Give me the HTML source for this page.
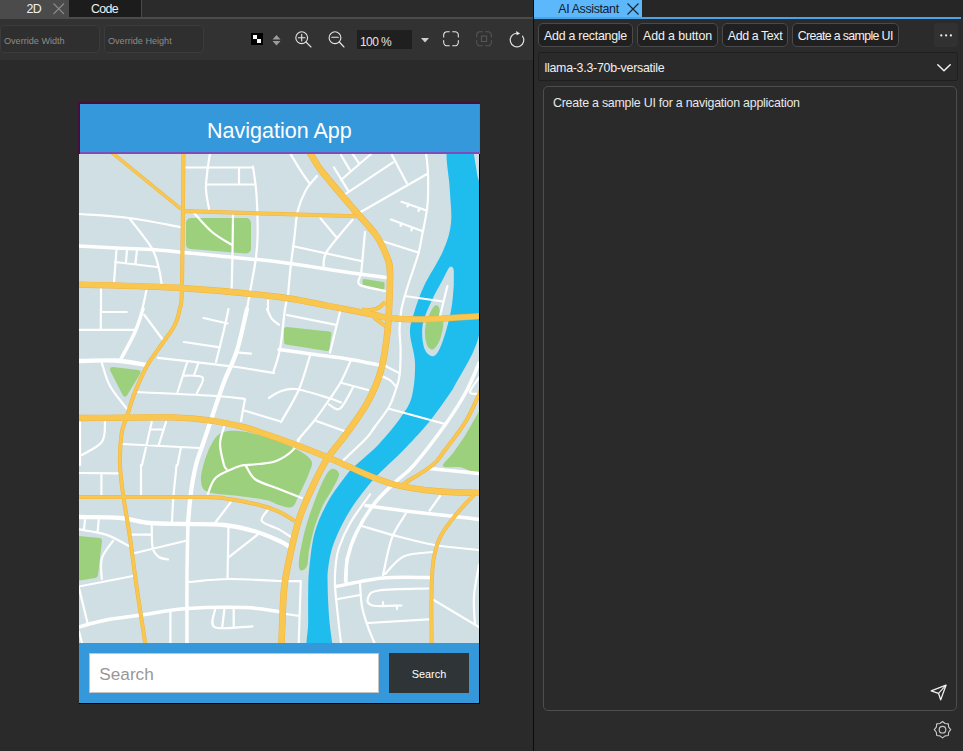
<!DOCTYPE html>
<html><head><meta charset="utf-8"><title>UI</title>
<style>
*{box-sizing:border-box;margin:0;padding:0}
html,body{width:963px;height:751px;overflow:hidden;background:#2a2a2a;font-family:"Liberation Sans",sans-serif;color:#e6e6e6}
#left{position:absolute;left:0;top:0;width:533px;height:751px;background:#2a2a2a}
#ltabs{position:absolute;left:0;top:0;width:533px;height:17px;background:#2b2b2b}
#ltabline{position:absolute;left:0;top:17px;width:533px;height:2px;background:#4b4b4b}
.tab2d{position:absolute;left:0;top:0;width:69px;height:17px;background:#4b4b4b}
.tabcode{position:absolute;left:69px;top:0;width:73px;height:17px;background:#1c1c1c;border-right:1px solid #4b4b4b}
.tabtxt{position:absolute;top:1.6px;font-size:12.4px;letter-spacing:-0.64px;line-height:15px;color:#f0f0f0;white-space:nowrap}
#toolbar{position:absolute;left:0;top:19px;width:533px;height:41px;background:#323232}
.ov{position:absolute;top:6px;height:28px;border:1px solid #3b3b3b;border-radius:4px;background:#2f2f2f;font-size:9.1px;line-height:30px;color:#8c8c8c;padding-left:3px;white-space:nowrap}
#zoombox{position:absolute;left:357px;top:11px;width:55px;height:19px;background:#1f1f1f;font-size:12px;letter-spacing:-0.6px;line-height:24px;color:#e4e4e4;padding-left:3px;white-space:nowrap}
#divider{position:absolute;left:533px;top:0;width:1.3px;height:751px;background:#0c0c0c}
#right{position:absolute;left:535px;top:0;width:428px;height:751px;background:#2b2b2b;box-shadow:-0.8px 0 0 #2b2b2b}
#rtabs{position:absolute;left:-1px;top:0;width:429px;height:17px;background:#262626}
#rtab{position:absolute;left:0;top:0;width:107.7px;height:17px;background:#5cb8fa}
#rtabtxt{position:absolute;left:24.3px;top:1.8px;letter-spacing:-0.36px;font-size:12.4px;line-height:15px;color:#14202c;white-space:nowrap}
#rline{position:absolute;left:-1px;top:17px;width:427px;height:2px;background:#4ba3e8}
.btn{position:absolute;top:23px;height:24px;border:1px solid #4a4a4a;border-radius:5px;background:#202020;line-height:24.5px;color:#f2f2f2;text-align:center;white-space:nowrap}
#more{position:absolute;left:399px;top:23px;width:24px;height:24px;border-radius:4px;background:#313131}
#combo{position:absolute;left:3px;top:52px;width:420px;height:29px;border:1px solid #1f1f1f;border-radius:2px;background:#2a2a2a;font-size:12.4px;letter-spacing:-0.27px;line-height:31px;color:#f0f0f0;padding-left:5.5px;white-space:nowrap}
#ta{position:absolute;left:8px;top:86px;width:414px;height:625px;border:1px solid #4d4d4d;border-radius:5px;background:#2a2a2a;font-size:12.4px;letter-spacing:-0.23px;color:#e8e8e8}
svg.ic{position:absolute;overflow:visible}
/* phone */
#phone{position:absolute;left:79px;top:103px;width:401px;height:600.6px;background:#000}
#hdr{position:absolute;left:0.6px;top:0.4px;width:400.6px;height:50.4px;background:#3498db;text-align:center;color:#fff;font-size:21.5px;line-height:56px;white-space:nowrap;text-indent:-1px}
.sel{position:absolute}
#map{position:absolute;left:0;top:50px;width:400px;height:490px;background:#d0dfe4;overflow:hidden}
#bbar{position:absolute;left:0;top:540px;width:400.2px;height:59.8px;background:#3498db}
#sin{position:absolute;left:10px;top:10px;width:290px;height:40px;background:#fff;border:1px solid #c4c4c4;color:#979797;font-size:17.2px;line-height:41px;padding-left:9.3px}
#sbtn{position:absolute;left:310px;top:10px;width:80px;height:40px;background:#2f3437;color:#fff;font-size:10.9px;line-height:42.5px;text-align:center}
</style></head><body>
<div id="left">
  <div id="ltabs"><div class="tab2d"></div><div class="tabcode"></div>
    <span class="tabtxt" style="left:26.5px">2D</span>
    <span class="tabtxt" style="left:91px">Code</span>
    <svg class="ic" style="left:53px;top:3px" width="12" height="12" viewBox="0 0 12 12"><path d="M0.5 0.5L11 11M11 0.5L0.5 11" stroke="#8a8a8a" stroke-width="1.1" fill="none"/></svg>
  </div>
  <div id="ltabline"></div>
  <div id="toolbar">
    <div class="ov" style="left:0px;width:100px">Override Width</div>
    <div class="ov" style="left:104px;width:100px">Override Height</div>
    <!-- checker -->
    <svg class="ic" style="left:251px;top:14px" width="12" height="12" viewBox="0 0 12 12"><rect width="12" height="12" fill="#000"/><rect x="2" y="2" width="4" height="4" fill="#fff"/><rect x="6" y="6" width="4" height="4" fill="#fff"/></svg>
    <!-- spinner -->
    <svg class="ic" style="left:272px;top:16px" width="9" height="11" viewBox="0 0 9 11"><path d="M0.5 4.6L4.5 0L8.5 4.6Z M0.5 6L8.5 6L4.5 10.6Z" fill="#9c9c9c"/></svg>
    <!-- zoom in -->
    <svg class="ic" style="left:294px;top:10.7px" width="20" height="20" viewBox="0 0 20 20"><g fill="none" stroke="#e6e6e6" stroke-width="1.1" stroke-linecap="round"><circle cx="7.7" cy="7.7" r="5.9"/><path d="M12 12L17 17M4.4 7.7H11M7.7 4.4V11"/></g></svg>
    <!-- zoom out -->
    <svg class="ic" style="left:326.6px;top:10.7px" width="20" height="20" viewBox="0 0 20 20"><g fill="none" stroke="#e6e6e6" stroke-width="1.1" stroke-linecap="round"><circle cx="8" cy="7.7" r="5.9"/><path d="M12.3 12L17 17M4.7 7.2H11.3"/></g></svg>
    <div id="zoombox">100 %</div>
    <svg class="ic" style="left:420.5px;top:19px" width="8" height="5" viewBox="0 0 8 5"><path d="M0 0H8L4 4.4Z" fill="#cfcfcf"/></svg>
    <!-- fit -->
    <svg class="ic" style="left:443px;top:12px" width="16.5" height="16" viewBox="0 0 17 16" preserveAspectRatio="none"><g fill="none" stroke="#e6e6e6" stroke-width="1.1" stroke-linecap="round"><path d="M0.7 6V4.2A3.5 3.5 0 0 1 4.2 0.7H6.5M10 0.7H12.3A3.5 3.5 0 0 1 15.8 4.2V6M15.8 9.5V11.3A3.5 3.5 0 0 1 12.3 14.8H10M6.5 14.8H4.2A3.5 3.5 0 0 1 0.7 11.3V9.5"/></g></svg>
    <!-- disabled fit -->
    <svg class="ic" style="left:476px;top:12px" width="16.5" height="16" viewBox="0 0 17 16" preserveAspectRatio="none"><g fill="none" stroke="#565656" stroke-width="1.1" stroke-linecap="round"><path d="M0.7 6V4.2A3.5 3.5 0 0 1 4.2 0.7H6.5M10 0.7H12.3A3.5 3.5 0 0 1 15.8 4.2V6M15.8 9.5V11.3A3.5 3.5 0 0 1 12.3 14.8H10M6.5 14.8H4.2A3.5 3.5 0 0 1 0.7 11.3V9.5"/><rect x="5.6" y="5.1" width="5.4" height="5.4"/></g></svg>
    <!-- refresh -->
    <svg class="ic" style="left:508px;top:11px" width="18" height="18" viewBox="0 0 18 18"><g fill="none" stroke="#e6e6e6" stroke-width="1.1" stroke-linecap="round"><path d="M14.57 6.1A6.8 6.8 0 1 1 8.41 3.23"/></g><path d="M8.1 1.1L8.6 5.3L12.1 3.5Z" fill="#e6e6e6"/></svg>
  </div>
  <div id="phone">
    <div id="map"><svg width="400" height="490" viewBox="0 0 400 490" style="position:absolute;left:0;top:0;display:block;filter:blur(0.45px)">
<rect width="400" height="490" fill="#d0dfe4"/>
<path d="M369.0 -6.0C365.1 0.8 370.2 22.3 370.7 35.0C371.2 47.7 373.1 59.5 372.0 70.0C370.9 80.5 368.5 87.5 364.0 98.0C359.5 108.5 349.8 122.7 345.0 133.0C340.2 143.3 337.3 152.2 335.0 160.0C332.7 167.8 330.8 171.7 331.0 180.0C331.2 188.3 335.7 199.5 336.0 210.0C336.3 220.5 335.3 234.0 333.0 243.0C330.7 252.0 327.5 256.0 322.0 264.0C316.5 272.0 307.5 283.0 300.0 291.0C292.5 299.0 282.4 306.8 277.0 312.0C271.6 317.2 272.2 315.8 267.5 322.0C262.8 328.2 254.1 339.3 248.8 349.0C243.5 358.7 238.7 368.8 235.6 380.0C232.5 391.2 231.3 406.0 230.2 416.0C229.1 426.0 229.4 431.0 229.2 440.0C229.0 449.0 229.2 460.0 229.2 470.0C229.2 480.0 225.1 495.0 229.2 500.0C233.3 505.0 250.0 501.7 254.0 500.0C258.0 498.3 253.8 495.0 253.2 490.0C252.6 485.0 251.3 476.7 250.6 470.0C249.9 463.3 249.5 456.5 249.2 449.8C248.9 443.1 248.6 435.8 248.6 430.0C248.6 424.2 248.2 421.5 249.2 415.0C250.2 408.5 251.1 400.2 254.5 391.0C257.9 381.8 263.5 370.0 269.5 360.0C275.5 350.0 284.1 338.8 290.5 331.0C296.9 323.2 302.4 318.6 308.0 313.0C313.6 307.4 317.4 304.4 324.3 297.2C331.2 290.0 341.7 279.2 349.5 269.7C357.3 260.2 366.7 246.4 371.2 240.0C375.7 233.6 372.5 238.2 376.5 231.0C380.5 223.8 390.6 207.8 395.0 197.0C399.4 186.2 400.5 182.2 403.0 166.0C405.5 149.8 408.8 119.3 410.0 100.0C411.2 80.7 411.7 62.0 410.0 50.0C408.3 38.0 402.2 34.0 400.0 28.0C397.8 22.0 397.9 18.7 397.0 14.0C396.1 9.3 395.3 3.3 394.8 0.0C394.3 -3.3 398.3 -5.0 394.0 -6.0C389.7 -7.0 372.9 -12.8 369.0 -6.0Z" fill="#1fbdee"/>
<path d="M369.5 115.5C371.0 113.1 371.2 113.7 372.0 113.8C372.8 113.9 374.0 114.1 374.5 116.0C375.0 117.9 374.8 121.8 374.8 125.0C374.8 128.2 375.0 129.8 374.6 135.0C374.2 140.2 373.6 148.8 372.3 156.0C371.0 163.2 368.9 171.5 367.0 178.0C365.1 184.5 363.0 190.8 361.0 195.0C359.0 199.2 357.2 202.2 355.0 203.0C352.8 203.8 349.8 202.2 348.0 200.0C346.2 197.8 344.7 195.0 344.0 190.0C343.3 185.0 342.5 177.2 344.0 170.0C345.5 162.8 349.8 154.0 353.0 147.0C356.2 140.0 360.2 133.2 363.0 128.0C365.8 122.8 368.0 117.9 369.5 115.5Z" fill="#d0dfe4"/>
<path d="M358.5 152.5C359.4 152.9 360.1 154.2 360.5 156.0C360.9 157.8 360.4 161.0 361.0 163.0C361.6 165.0 363.5 166.0 364.0 168.0C364.5 170.0 364.7 171.5 364.0 175.0C363.3 178.5 361.7 185.4 360.0 189.0C358.3 192.6 355.9 195.8 354.0 196.5C352.1 197.2 349.8 195.4 348.5 193.0C347.2 190.6 346.2 185.8 346.0 182.0C345.8 178.2 346.2 173.7 347.0 170.0C347.8 166.3 349.7 162.8 351.0 160.0C352.3 157.2 353.8 154.8 355.0 153.5C356.2 152.2 357.6 152.1 358.5 152.5Z" fill="#9dd07c"/>
<path d="M142.0 280.0C146.7 277.7 152.8 277.4 160.0 278.0C167.2 278.6 175.8 280.7 185.0 283.5C194.2 286.3 207.2 291.1 215.0 295.0C222.8 298.9 229.5 302.8 232.0 307.0C234.5 311.2 232.0 314.2 230.0 320.0C228.0 325.8 222.8 336.3 220.0 342.0C217.2 347.7 216.3 352.3 213.0 354.0C209.7 355.7 204.3 353.2 200.0 352.0C195.7 350.8 193.7 348.5 187.0 347.0C180.3 345.5 169.7 344.3 160.0 343.0C150.3 341.7 135.3 341.5 129.0 339.0C122.7 336.5 122.7 332.8 122.0 328.0C121.3 323.2 123.3 316.0 125.0 310.0C126.7 304.0 129.2 297.0 132.0 292.0C134.8 287.0 137.3 282.3 142.0 280.0Z" fill="#9dd07c"/>
<path d="M252.5 316.0C255.0 315.2 259.8 317.7 260.0 321.0C260.2 324.3 256.2 330.7 253.5 336.0C250.8 341.3 246.5 346.5 243.5 353.0C240.5 359.5 237.6 367.5 235.3 375.0C233.1 382.5 231.2 391.7 230.0 398.0C228.8 404.3 229.3 409.8 228.0 413.0C226.7 416.2 223.4 418.0 222.0 417.5C220.6 417.0 219.6 414.6 219.8 410.0C220.0 405.4 221.6 396.7 223.0 390.0C224.4 383.3 225.8 377.2 228.0 370.0C230.2 362.8 233.2 354.3 236.0 347.0C238.8 339.7 242.2 331.2 245.0 326.0C247.8 320.8 250.0 316.8 252.5 316.0Z" fill="#9dd07c"/>
<path d="M406.0 252.0C404.7 243.0 401.2 257.2 398.0 262.0C394.8 266.8 391.0 274.7 387.0 281.0C383.0 287.3 377.8 294.7 374.0 300.0C370.2 305.3 363.0 310.7 364.0 313.0C365.0 315.3 373.0 313.5 380.0 314.0C387.0 314.5 401.7 326.3 406.0 316.0C410.3 305.7 407.3 261.0 406.0 252.0Z" fill="#9dd07c"/>
<path d="M112.0 70.0L167.0 70.0L167.0 95.5L112.0 91.0Z" fill="#9dd07c" stroke="#9dd07c" stroke-width="10" stroke-linejoin="round"/>
<path d="M285.0 127.5L304.0 130.5L304.0 135.0L285.0 130.5Z" fill="#9dd07c" stroke="#9dd07c" stroke-width="3" stroke-linejoin="round"/>
<path d="M33.5 216.5L59.0 219.5L46.0 241.0Z" fill="#9dd07c" stroke="#9dd07c" stroke-width="5" stroke-linejoin="round"/>
<path d="M207.5 176.5L250.0 181.0L248.0 195.5L207.5 189.0Z" fill="#9dd07c" stroke="#9dd07c" stroke-width="5" stroke-linejoin="round"/>
<path d="M0.0 386.0L20.0 388.0L16.0 422.0L0.0 424.5Z" fill="#9dd07c" stroke="#9dd07c" stroke-width="6" stroke-linejoin="round"/>
<path d="M168.0 156.0C166.3 162.9 161.8 185.3 158.0 197.5C154.2 209.7 149.2 217.9 145.0 229.0C140.8 240.1 136.4 254.0 133.0 264.0C129.6 274.0 127.3 281.0 124.6 289.0C121.9 297.0 119.1 303.7 117.0 312.0C114.9 320.3 113.3 329.3 112.0 339.0C110.7 348.7 109.5 364.8 109.0 370.0M0.0 208.0C6.2 207.9 25.8 206.8 37.0 207.5C48.2 208.2 62.4 211.2 67.5 212.0M0.0 364.0C6.9 364.2 29.7 364.0 41.5 365.0C53.3 366.0 59.5 369.0 70.6 370.0C81.7 371.0 95.6 370.7 108.0 371.0C120.4 371.3 133.6 370.8 145.0 372.0C156.4 373.2 167.3 375.9 176.5 378.5C185.7 381.1 194.2 385.2 200.0 387.8C205.8 390.4 209.2 393.0 211.0 394.0" fill="none" stroke="#fff" stroke-width="4.3" stroke-linecap="round" stroke-linejoin="round"/>
<path d="M109.0 370.0C108.8 378.3 108.2 400.0 108.0 420.0C107.8 440.0 108.0 478.3 108.0 490.0M64.0 156.0C62.7 159.8 59.8 170.5 56.0 179.0C52.2 187.5 43.9 202.3 41.5 207.0M0.0 93.0C6.2 93.3 24.8 94.4 37.0 95.0C49.2 95.6 55.8 95.2 73.0 96.5C90.2 97.8 118.8 100.9 140.0 103.0C161.2 105.1 180.0 106.5 200.0 109.0C220.0 111.5 242.2 115.4 260.0 118.0C277.8 120.6 299.2 123.5 307.0 124.6M0.0 474.0C4.5 472.8 16.7 469.0 27.0 467.0C37.3 465.0 48.5 463.9 62.0 462.0C75.5 460.1 90.7 456.8 108.0 455.6C125.3 454.4 150.7 454.1 166.0 454.6C181.3 455.1 194.3 458.0 200.0 458.7M200.0 196.5C205.3 197.2 220.6 199.4 232.0 201.0C243.4 202.6 257.2 204.2 268.5 206.0C279.8 207.8 294.5 211.0 299.7 212.0M400.0 210.0C397.8 214.8 392.7 228.7 387.0 239.0C381.3 249.3 374.7 259.8 366.0 272.0C357.3 284.2 343.0 302.7 335.0 312.0C327.0 321.3 324.6 321.2 318.0 327.6C311.4 334.0 302.3 341.6 295.5 350.4C288.7 359.2 281.5 371.3 277.0 380.5C272.5 389.7 270.2 397.6 268.5 405.5C266.8 413.4 266.8 424.2 266.5 428.0M287.0 352.5C293.3 353.4 310.4 355.9 324.6 357.7C338.8 359.4 359.4 361.6 372.0 363.0C384.6 364.4 395.3 365.8 400.0 366.4M350.6 315.5L400.0 320.5M257.0 433.5C264.8 432.1 288.4 426.5 304.0 425.0C319.6 423.5 342.8 424.6 350.6 424.5" fill="none" stroke="#fff" stroke-width="3.5" stroke-linecap="round" stroke-linejoin="round"/>
<path d="M0.0 61.0C8.3 61.7 33.2 62.8 50.0 65.0C66.8 67.2 92.5 72.5 101.0 74.0M51.0 66.0C54.7 70.9 68.2 87.2 73.0 95.5C77.8 103.8 78.4 110.2 80.0 116.0C81.6 121.8 82.1 128.1 82.5 130.5M37.4 97.6L35.0 130.0M48.0 97.0L47.0 109.0M58.0 97.0L56.5 110.0M36.0 109.0L78.0 114.0M22.0 136.0L22.0 160.0M67.5 137.0L63.0 158.0M106.0 14.5L174.0 14.5M131.0 0.0C130.5 3.5 128.7 14.8 128.0 21.0C127.3 27.2 126.7 31.2 127.0 37.0C127.3 42.8 129.5 52.8 130.0 56.0M174.0 13.5C174.6 18.2 176.7 29.9 177.5 41.5C178.3 53.1 178.8 71.9 178.6 83.0C178.4 94.1 177.8 98.7 176.5 108.0C175.2 117.3 172.4 131.0 171.0 139.0C169.6 147.0 168.5 153.2 168.0 156.0M128.0 31.5L174.5 31.5M160.0 14.5L160.0 31.5M154.0 62.0C153.9 68.3 153.7 87.5 153.5 100.0C153.3 112.5 152.8 130.8 152.6 137.0M115.0 60.0C118.0 63.2 126.5 73.6 133.0 79.0C139.4 84.4 150.2 90.2 153.7 92.4M189.0 147.5L189.0 158.0M211.0 0.0C212.7 2.8 217.7 11.4 221.0 16.6C224.3 21.8 229.3 28.6 231.0 31.0M238.0 23.0C236.2 25.3 230.2 31.2 227.0 37.0C223.8 42.8 220.6 50.3 218.7 58.0C216.8 65.7 216.8 73.3 215.6 83.0C214.4 92.7 212.5 106.0 211.4 116.0C210.3 126.0 209.4 138.5 209.0 143.0M215.6 93.5L282.0 108.0M273.7 66.5C269.4 71.8 252.7 90.8 247.8 98.6C243.0 106.3 245.1 110.6 244.6 113.0M241.5 65.4L258.0 85.0M286.0 79.0L282.0 122.5M281.0 123.6C281.0 125.0 276.8 129.6 281.0 132.0C285.2 134.4 301.8 137.0 306.0 138.0M264.0 42.6L314.0 9.3M262.0 27.0L292.0 1.0M255.0 14.5L269.6 38.4M262.0 2.0L270.6 16.6M273.7 1.0L280.0 10.4M280.0 60.0L348.5 20.8M313.0 2.0L327.7 30.0M347.0 0.0C347.3 3.5 348.8 12.3 349.0 21.0C349.2 29.7 349.5 41.7 348.5 52.0C347.5 62.3 344.6 74.7 343.0 83.0C341.4 91.3 341.4 93.7 339.0 102.0C336.6 110.3 331.6 124.0 328.8 133.0C326.1 142.0 323.9 148.7 322.5 156.0C321.1 163.3 320.6 170.3 320.5 177.0C320.4 183.7 321.6 188.5 321.6 196.0C321.6 203.5 321.5 215.1 320.6 222.0C319.8 228.9 318.3 232.2 316.5 237.5C314.7 242.8 313.5 247.9 310.0 254.0C306.5 260.1 299.4 268.8 295.7 274.0C291.9 279.2 292.7 279.5 287.5 285.0C282.3 290.5 268.5 303.3 264.7 307.0M306.6 213.0L320.6 220.4M303.5 223.5C304.9 224.2 309.7 226.2 312.0 228.0C314.3 229.8 316.6 233.3 317.5 234.4M322.5 48.8L346.0 57.0M312.0 66.5L343.0 78.0M303.0 88.0L340.0 99.7M329.0 50.5L328.5 53.5M340.0 55.0L339.5 58.0M322.0 70.0L321.5 73.0M333.0 74.5L332.5 77.5M325.6 143.0L364.0 148.5M368.4 133.0L361.0 163.0M0.0 176.8L55.0 176.8M21.8 156.0L21.8 176.8M21.8 159.0L47.8 159.0M65.4 162.0L84.0 187.0M22.8 210.0C24.2 213.8 26.8 225.4 31.0 233.0C35.2 240.6 45.0 251.9 47.8 255.7M79.0 204.8C90.8 206.2 130.2 210.5 149.5 213.0C168.8 215.5 187.4 218.8 195.0 220.0M58.0 239.0C71.2 239.7 119.0 241.8 137.0 243.0C155.0 244.2 161.2 245.5 166.0 246.0M166.0 246.0L162.0 268.0M149.5 156.0C148.8 159.5 147.1 168.0 145.0 176.8C142.9 185.6 138.3 203.6 137.0 209.0M124.6 165.0L148.5 170.5M105.0 189.0L141.0 194.4M160.0 199.6L172.0 200.7M108.0 209.6L98.6 239.0M119.0 211.0L115.0 222.5M104.0 222.5C107.3 222.8 121.3 221.6 123.6 224.5C125.9 227.4 118.9 237.4 118.0 240.0M209.0 143.0C208.5 145.2 207.3 147.2 206.0 156.0C204.7 164.8 203.0 185.3 201.0 196.0C199.0 206.7 195.2 216.0 194.0 220.0M188.0 156.0C188.8 157.7 191.0 163.4 193.0 166.0C195.0 168.6 198.8 170.7 200.0 171.6M190.0 245.0C191.7 244.0 195.6 240.5 200.0 239.0C204.4 237.5 208.3 235.0 216.6 236.0C224.9 237.0 242.4 242.8 250.0 245.0C257.6 247.2 260.0 248.8 262.0 249.5M166.0 257.8L200.0 268.0M26.0 269.0C25.5 272.3 27.1 283.2 22.8 289.0C18.5 294.8 3.8 301.1 0.0 303.5M1.0 269.0L1.0 312.0M72.7 269.0L63.0 312.0M87.0 269.0L80.0 291.0M71.6 276.5L85.0 276.5M43.6 291.0L120.5 295.0M101.8 295.0L98.6 312.0M145.0 274.0C144.3 276.8 141.0 284.7 141.0 291.0C141.0 297.3 143.9 307.8 145.0 312.0C146.1 316.2 147.1 315.3 147.5 316.0M208.0 162.0L256.0 171.6M261.0 159.0L251.0 199.6M231.0 202.7C229.1 208.4 224.5 225.9 219.7 237.0C214.9 248.1 204.9 263.7 202.0 269.0M271.6 208.0C270.0 211.4 265.6 222.2 262.0 228.7C258.4 235.2 254.5 240.4 250.0 247.0C245.5 253.6 240.2 261.3 235.0 268.0C229.8 274.7 221.4 283.8 218.7 287.0M262.0 229.7L289.0 237.0M273.7 235.0C271.6 238.4 264.9 252.9 261.0 255.7C257.1 258.4 251.8 252.2 250.0 251.5M237.4 268.0L266.5 278.5M310.0 255.7L366.0 271.0M400.0 224.5C398.5 226.9 391.0 236.2 391.0 239.0C391.0 241.8 398.5 240.7 400.0 241.0M62.0 312.0L62.0 342.0M97.6 312.0C97.1 317.2 95.3 333.5 94.5 343.0C93.7 352.5 93.2 364.7 93.0 369.0M0.0 320.0L39.5 320.3M22.4 320.0L22.4 343.0M6.0 367.0L5.0 376.4M19.7 367.0L18.7 378.5M0.0 376.4C4.5 377.3 18.7 378.8 27.0 381.6C35.3 384.4 46.2 391.1 50.0 393.0M34.0 387.8C32.1 390.8 24.7 399.1 22.8 405.5C20.9 411.9 22.8 422.6 22.8 426.0M0.0 433.5L54.0 423.0M52.0 381.6L72.7 381.6M72.7 372.0C72.9 375.8 72.5 389.7 73.7 395.0C74.9 400.3 77.5 402.1 80.0 404.0C82.5 405.9 87.5 406.1 89.0 406.5M56.0 400.0L107.0 387.8M151.6 349.4L136.0 370.0M149.5 374.0L148.5 425.0M149.5 404.4L178.6 381.6M110.0 429.0C116.6 428.5 134.5 426.2 149.5 426.0C164.5 425.8 187.9 427.7 200.0 428.0C212.1 428.3 218.2 428.0 221.8 428.0M91.4 459.8L91.4 490.0M136.0 456.7C136.0 459.6 129.8 471.5 136.0 474.3C142.2 477.1 167.2 473.5 173.4 473.3M145.4 456.0L143.3 473.5M154.7 456.0L154.7 473.5M0.0 435.0L8.3 469.0M0.0 478.5L3.0 490.0M189.0 356.6C188.0 358.5 181.0 364.7 182.8 368.0C184.6 371.3 195.2 373.8 200.0 376.4C204.8 379.0 209.5 382.4 211.4 383.6M128.8 341.0C130.2 338.2 132.1 329.0 137.0 324.5C141.9 320.0 153.2 316.1 158.0 314.0C162.8 311.9 164.7 312.3 166.0 312.0M167.0 313.0C168.6 315.2 171.0 322.7 176.5 326.5C182.0 330.3 192.3 332.9 200.0 336.0C207.7 339.1 219.0 343.5 222.8 345.0M220.5 286.0C219.3 288.0 217.1 294.1 213.2 297.8C209.3 301.5 202.7 305.8 197.2 308.0C191.7 310.2 185.2 310.3 180.0 311.0C174.8 311.7 168.3 311.8 166.0 312.0M291.0 341.5C287.8 346.2 276.7 360.6 271.5 369.5C266.3 378.4 262.5 387.5 260.0 394.6C257.5 401.7 257.4 405.7 256.7 412.0C256.0 418.3 255.6 423.8 256.0 432.5C256.4 441.2 258.0 454.4 259.0 464.0C260.0 473.6 261.5 485.7 262.0 490.0M283.0 373.0C288.5 374.6 303.9 379.4 316.0 382.6C328.1 385.8 341.7 389.6 355.7 392.0C369.7 394.4 392.6 396.2 400.0 397.0M326.7 360.8C324.4 364.8 316.8 374.5 313.0 384.7C309.2 394.9 305.5 415.8 304.0 422.0M361.0 343.0L350.6 357.7M306.0 421.0C309.1 418.1 316.7 407.1 324.6 403.4C332.6 399.7 348.9 399.7 353.7 399.0M349.5 435.5C341.2 435.8 309.8 435.9 299.7 437.5C289.6 439.1 290.0 442.5 289.0 445.0C288.0 447.5 287.9 451.2 293.5 452.5C299.1 453.8 317.7 452.5 322.5 452.5M304.0 449.0L304.0 452.5M318.0 452.5L318.0 456.0M281.0 430.0C281.3 433.9 281.7 446.2 283.0 453.5C284.3 460.8 286.9 467.9 289.0 474.0C291.1 480.1 294.4 487.3 295.5 490.0M259.0 446.0L281.0 442.0M289.0 470.0L349.5 466.4M354.7 447.0L400.0 474.0M400.0 411.7C399.2 416.9 395.7 432.9 395.0 443.0C394.3 453.1 395.8 467.2 396.0 472.0M221.8 428.0L219.7 490.0M206.0 460.8L220.8 463.0M267.5 405.0L267.5 429.6" fill="none" stroke="#fff" stroke-width="2.2" stroke-linecap="round" stroke-linejoin="round"/>
<path d="M31.0 -2.0L102.0 56.0" fill="none" stroke="#eeb340" stroke-width="3.5" stroke-linecap="butt" stroke-linejoin="round"/>
<path d="M104.5 -2.0C104.2 20.5 103.6 106.7 103.0 133.0C102.4 159.3 102.0 149.4 100.7 156.0C99.5 162.6 98.5 166.8 95.5 172.6C92.5 178.4 87.5 184.4 83.0 191.0C78.5 197.6 73.0 204.0 68.5 212.0C64.0 220.0 59.5 230.3 56.0 239.0C52.5 247.7 50.0 257.1 47.8 264.0C45.6 270.9 43.7 272.6 42.6 280.6C41.5 288.6 40.7 301.3 41.0 312.0C41.3 322.7 42.9 332.9 44.6 345.0C46.3 357.1 48.8 369.4 51.0 384.7C53.2 400.0 55.4 418.7 58.0 436.6C60.6 454.5 65.1 482.8 66.5 492.0M103.0 58.0C119.2 58.5 171.0 60.1 200.0 61.0C229.0 61.9 264.2 62.8 277.0 63.2" fill="none" stroke="#eeb340" stroke-width="4.0" stroke-linecap="butt" stroke-linejoin="round"/>
<path d="M-2.0 131.5C15.3 132.1 68.3 132.9 102.0 135.0C135.7 137.1 175.3 141.0 200.0 144.0C224.7 147.0 233.7 149.9 250.0 153.0C266.3 156.1 287.9 160.3 297.6 162.3C307.3 164.3 300.1 164.1 308.0 164.8C315.9 165.5 329.3 166.6 345.0 166.3C360.7 166.0 392.5 163.6 402.0 163.0M-2.0 265.0C13.9 264.9 70.7 263.9 93.5 264.4C116.3 264.9 122.9 266.3 135.0 268.0C147.1 269.7 158.5 272.6 166.0 274.4C173.5 276.2 171.9 276.1 180.0 278.9C188.1 281.6 202.9 286.6 214.3 290.9C225.7 295.1 239.1 300.5 248.6 304.4C258.1 308.3 264.6 311.4 271.5 314.4C278.4 317.4 282.6 319.7 290.0 322.6C297.4 325.5 305.1 329.1 316.0 331.7C326.9 334.3 341.4 336.6 355.7 338.0C370.0 339.4 394.3 339.7 402.0 340.0" fill="none" stroke="#eeb340" stroke-width="6.300000000000001" stroke-linecap="butt" stroke-linejoin="round"/>
<path d="M230.0 -2.0C231.9 1.1 235.8 9.0 241.5 16.6C247.2 24.2 257.9 36.4 264.0 43.6C270.1 50.8 272.4 53.4 278.0 60.0C283.6 66.6 292.6 75.7 297.6 83.0C302.6 90.3 305.8 98.2 308.0 104.0C310.2 109.8 310.7 109.3 311.0 118.0C311.3 126.7 310.5 145.2 310.0 156.0C309.5 166.8 309.4 172.7 308.0 183.0C306.6 193.3 305.1 206.9 301.8 218.0C298.6 229.1 294.2 239.1 288.5 249.5C282.8 259.9 274.2 271.3 267.5 280.6C260.8 289.9 253.6 297.5 248.3 305.5C243.1 313.5 240.6 318.9 236.0 328.6C231.4 338.4 225.1 351.2 220.8 364.0C216.5 376.8 213.0 393.4 210.4 405.5C207.8 417.6 206.3 422.2 205.0 436.6C203.7 451.0 202.9 482.8 202.5 492.0" fill="none" stroke="#eeb340" stroke-width="6.6000000000000005" stroke-linecap="butt" stroke-linejoin="round"/>
<path d="M402.0 237.0C399.5 242.2 393.0 258.0 387.0 268.0C381.0 278.0 371.6 289.7 366.0 297.0C360.4 304.3 360.2 306.6 353.7 312.0C347.1 317.4 332.1 326.1 326.7 329.6C321.2 333.1 321.9 332.4 321.0 333.0M395.0 342.0C392.3 345.0 384.1 353.0 378.6 359.8C373.1 366.6 366.0 375.0 362.0 382.6C358.0 390.2 356.3 396.5 354.7 405.5C353.1 414.5 353.0 422.2 352.6 436.6C352.2 451.0 352.6 482.8 352.6 492.0M-2.0 344.0C19.1 344.0 99.3 343.7 124.6 344.0C149.8 344.3 140.5 344.8 149.5 346.0C158.5 347.2 170.2 349.4 178.6 351.5C187.0 353.6 193.8 355.9 200.0 358.7C206.2 361.4 213.0 366.4 215.6 368.0M294.6 164.4L307.0 173.5M283.0 156.5C284.7 156.6 290.2 157.1 293.0 156.8C295.8 156.5 297.8 155.8 300.0 154.5C302.2 153.2 305.4 149.9 306.5 149.0" fill="none" stroke="#eeb340" stroke-width="3.9" stroke-linecap="butt" stroke-linejoin="round"/>
<path d="M31.0 -2.0L102.0 56.0" fill="none" stroke="#f9c74f" stroke-width="2.6" stroke-linecap="butt" stroke-linejoin="round"/>
<path d="M104.5 -2.0C104.2 20.5 103.6 106.7 103.0 133.0C102.4 159.3 102.0 149.4 100.7 156.0C99.5 162.6 98.5 166.8 95.5 172.6C92.5 178.4 87.5 184.4 83.0 191.0C78.5 197.6 73.0 204.0 68.5 212.0C64.0 220.0 59.5 230.3 56.0 239.0C52.5 247.7 50.0 257.1 47.8 264.0C45.6 270.9 43.7 272.6 42.6 280.6C41.5 288.6 40.7 301.3 41.0 312.0C41.3 322.7 42.9 332.9 44.6 345.0C46.3 357.1 48.8 369.4 51.0 384.7C53.2 400.0 55.4 418.7 58.0 436.6C60.6 454.5 65.1 482.8 66.5 492.0M103.0 58.0C119.2 58.5 171.0 60.1 200.0 61.0C229.0 61.9 264.2 62.8 277.0 63.2" fill="none" stroke="#f9c74f" stroke-width="3.1" stroke-linecap="butt" stroke-linejoin="round"/>
<path d="M-2.0 131.5C15.3 132.1 68.3 132.9 102.0 135.0C135.7 137.1 175.3 141.0 200.0 144.0C224.7 147.0 233.7 149.9 250.0 153.0C266.3 156.1 287.9 160.3 297.6 162.3C307.3 164.3 300.1 164.1 308.0 164.8C315.9 165.5 329.3 166.6 345.0 166.3C360.7 166.0 392.5 163.6 402.0 163.0M-2.0 265.0C13.9 264.9 70.7 263.9 93.5 264.4C116.3 264.9 122.9 266.3 135.0 268.0C147.1 269.7 158.5 272.6 166.0 274.4C173.5 276.2 171.9 276.1 180.0 278.9C188.1 281.6 202.9 286.6 214.3 290.9C225.7 295.1 239.1 300.5 248.6 304.4C258.1 308.3 264.6 311.4 271.5 314.4C278.4 317.4 282.6 319.7 290.0 322.6C297.4 325.5 305.1 329.1 316.0 331.7C326.9 334.3 341.4 336.6 355.7 338.0C370.0 339.4 394.3 339.7 402.0 340.0" fill="none" stroke="#f9c74f" stroke-width="5.4" stroke-linecap="butt" stroke-linejoin="round"/>
<path d="M230.0 -2.0C231.9 1.1 235.8 9.0 241.5 16.6C247.2 24.2 257.9 36.4 264.0 43.6C270.1 50.8 272.4 53.4 278.0 60.0C283.6 66.6 292.6 75.7 297.6 83.0C302.6 90.3 305.8 98.2 308.0 104.0C310.2 109.8 310.7 109.3 311.0 118.0C311.3 126.7 310.5 145.2 310.0 156.0C309.5 166.8 309.4 172.7 308.0 183.0C306.6 193.3 305.1 206.9 301.8 218.0C298.6 229.1 294.2 239.1 288.5 249.5C282.8 259.9 274.2 271.3 267.5 280.6C260.8 289.9 253.6 297.5 248.3 305.5C243.1 313.5 240.6 318.9 236.0 328.6C231.4 338.4 225.1 351.2 220.8 364.0C216.5 376.8 213.0 393.4 210.4 405.5C207.8 417.6 206.3 422.2 205.0 436.6C203.7 451.0 202.9 482.8 202.5 492.0" fill="none" stroke="#f9c74f" stroke-width="5.7" stroke-linecap="butt" stroke-linejoin="round"/>
<path d="M402.0 237.0C399.5 242.2 393.0 258.0 387.0 268.0C381.0 278.0 371.6 289.7 366.0 297.0C360.4 304.3 360.2 306.6 353.7 312.0C347.1 317.4 332.1 326.1 326.7 329.6C321.2 333.1 321.9 332.4 321.0 333.0M395.0 342.0C392.3 345.0 384.1 353.0 378.6 359.8C373.1 366.6 366.0 375.0 362.0 382.6C358.0 390.2 356.3 396.5 354.7 405.5C353.1 414.5 353.0 422.2 352.6 436.6C352.2 451.0 352.6 482.8 352.6 492.0M-2.0 344.0C19.1 344.0 99.3 343.7 124.6 344.0C149.8 344.3 140.5 344.8 149.5 346.0C158.5 347.2 170.2 349.4 178.6 351.5C187.0 353.6 193.8 355.9 200.0 358.7C206.2 361.4 213.0 366.4 215.6 368.0M294.6 164.4L307.0 173.5M283.0 156.5C284.7 156.6 290.2 157.1 293.0 156.8C295.8 156.5 297.8 155.8 300.0 154.5C302.2 153.2 305.4 149.9 306.5 149.0" fill="none" stroke="#f9c74f" stroke-width="3.0" stroke-linecap="butt" stroke-linejoin="round"/>
</svg></div>
    <div id="hdr">Navigation App</div>
    <div class="sel" style="left:-1.1px;top:-1.3px;width:402.3px;height:1.8px;background:#4b0c3b"></div>
    <div class="sel" style="left:-1.1px;top:-1.3px;width:1.8px;height:52.1px;background:#4b0c3b"></div>
    <div class="sel" style="left:0.7px;top:49.2px;width:400.5px;height:1.6px;background:#7f4cbc"></div>
    <div class="sel" style="left:399.6px;top:0.5px;width:1.6px;height:50.3px;background:#a05ac8"></div>
    <div id="bbar"><div id="sin">Search</div><div id="sbtn">Search</div></div>
  </div>
</div>
<div id="divider"></div>
<div id="right">
  <div id="rtabs"><div id="rtab"></div><span id="rtabtxt">AI Assistant</span>
    <svg class="ic" style="left:93px;top:3px" width="12" height="12" viewBox="0 0 12 12"><path d="M0.5 0.5L11.5 11.5M11.5 0.5L0.5 11.5" stroke="#1a2630" stroke-width="1.2" fill="none"/></svg>
  </div>
  <div id="rline"></div>
  <div class="btn" style="left:3px;width:95px;font-size:12.4px;letter-spacing:-0.26px">Add a rectangle</div>
  <div class="btn" style="left:102px;width:81px;font-size:12.4px;letter-spacing:-0.11px">Add a button</div>
  <div class="btn" style="left:187px;width:66px;font-size:12.4px;letter-spacing:-0.39px">Add a Text</div>
  <div class="btn" style="left:256.5px;width:107.5px;font-size:12.4px;letter-spacing:-0.66px">Create a sample UI</div>
  <div id="more"><svg class="ic" style="left:0;top:0" width="24" height="24" viewBox="0 0 24 24"><circle cx="7.3" cy="12.4" r="1.1" fill="#f0f0f0"/><circle cx="12.1" cy="12.4" r="1.1" fill="#f0f0f0"/><circle cx="16.9" cy="12.4" r="1.1" fill="#f0f0f0"/></svg></div>
  <div id="combo">llama-3.3-70b-versatile
    <svg class="ic" style="left:398px;top:11px" width="14" height="8" viewBox="0 0 14 8"><path d="M0.8 0.8L7 6.8L13.2 0.8" stroke="#f0f0f0" stroke-width="1.5" fill="none" stroke-linecap="round" stroke-linejoin="round"/></svg>
  </div>
  <div id="ta"><div style="position:absolute;left:9px;top:9px;line-height:15px;white-space:nowrap">Create a sample UI for a navigation application</div>
    <svg class="ic" style="left:386px;top:597px" width="18" height="18" viewBox="0 0 18 18"><path d="M16 1.2L1.2 6.8L8.5 9.3L10.7 15.9Z" fill="none" stroke="#f0f0f0" stroke-width="1.3" stroke-linejoin="round"/><path d="M8.5 9.3L16 1.2" stroke="#f0f0f0" stroke-width="1.1"/></svg>
  </div>
  <!-- gear -->
  <svg class="ic" style="left:398px;top:720px" width="19" height="19" viewBox="-9.5 -9.7 19 19"><g fill="none" stroke="#c9c9c9" stroke-width="1.15" stroke-linejoin="round"><circle r="3.3"/><path d="M0.00 -8.20L2.56 -6.19L5.80 -5.80L6.19 -2.56L8.20 0.00L6.19 2.56L5.80 5.80L2.56 6.19L0.00 8.20L-2.56 6.19L-5.80 5.80L-6.19 2.56L-8.20 0.00L-6.19 -2.56L-5.80 -5.80L-2.56 -6.19Z"/></g></svg>
</div>
</body></html>
